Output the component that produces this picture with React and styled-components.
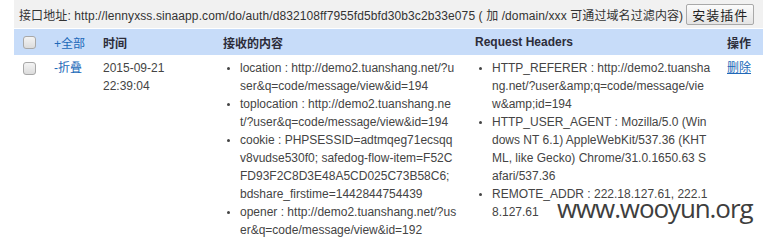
import React from 'react';
import styled, { createGlobalStyle } from 'styled-components';

const GlobalStyle = createGlobalStyle`
  body {
    margin: 0;
    background: #fff;
    font-family: "Liberation Sans", Arial, "Noto Sans CJK SC", sans-serif;
    font-size: 12px;
    color: #444;
  }
  * {
    box-sizing: border-box;
  }
`

const Page = styled.div`
  position: relative;
  padding-left: 14px;
  height: 240px;
  overflow: hidden;
`

const TopBar = styled.div`
  height: 28px;
  display: flex;
  align-items: center;
  padding-left: 5px;
  background: #f1f1f1;
  color: #333;
  white-space: nowrap;
  letter-spacing: 0.1px;
  margin-bottom: 1px;
`

const InstallButton = styled.button`
  margin-left: 3px;
  height: 21px;
  width: 68px;
  padding: 0;
  font-family: "Noto Sans CJK SC", sans-serif;
  font-size: 13px;
  letter-spacing: 1px;
  color: #222;
  border: 1px solid #a9a9a9;
  border-radius: 2px;
  background: linear-gradient(#fbfbfb, #e4e4e4);
`

const Table = styled.table`
  width: 100%;
  border-collapse: collapse;
  table-layout: fixed;
`

const HeadRow = styled.tr`
  background: #c7dcf9;
  height: 26px;
`

const Th = styled.th`
  text-align: left;
  padding: 0 8px;
  font-weight: bold;
  color: #2d2d3a;
  width: ${p => (p.$w ? `${p.$w}px` : 'auto')};
  white-space: nowrap;
`

const Td = styled.td`
  vertical-align: top;
  padding: 4px 8px;
  line-height: 18px;
  white-space: nowrap;
`

const Check = styled.span`
  display: inline-block;
  width: 13px;
  height: 13px;
  border: 1px solid #a8a8a8;
  border-radius: 3px;
  background: linear-gradient(#f4f4f4, #dcdcdc);
  vertical-align: middle;
  margin-left: 1px;
`

const CheckCell = styled.div`
  display: flex;
  align-items: center;
  height: 18px;
`

const Toggle = styled.a`
  color: #2068b8;
  text-decoration: none;
  font-weight: normal;
`

const DeleteLink = styled.a`
  color: #2068b8;
  text-decoration: underline;
`

const List = styled.ul`
  margin: 0;
  padding-left: 17px;
  list-style: disc;
`

const Item = styled.li`
  line-height: 18px;
  &::marker {
    font-size: 10px;
  }
`

/* site watermark laid over the screenshot */
const Watermark = styled.div`
  position: absolute;
  left: 557px;
  top: 199px;
  line-height: 18px;
  font-family: "Open Sans", "Liberation Sans", sans-serif;
  font-size: 26px;
  color: #3e3e3e;
  letter-spacing: -1.1px;
`

const content = [
  ['location : http://demo2.tuanshang.net/?u', 'ser&q=code/message/view&id=194'],
  ['toplocation : http://demo2.tuanshang.ne', 't/?user&q=code/message/view&id=194'],
  ['cookie : PHPSESSID=adtmqeg71ecsqq', 'v8vudse530f0; safedog-flow-item=F52C', 'FD93F2C8D3E48A5CD025C73B58C6;', 'bdshare_firstime=1442844754439'],
  ['opener : http://demo2.tuanshang.net/?us', 'er&q=code/message/view&id=192'],
];

const headers = [
  ['HTTP_REFERER : http://demo2.tuansha', 'ng.net/?user&amp;q=code/message/vie', 'w&amp;id=194'],
  ['HTTP_USER_AGENT : Mozilla/5.0 (Win', 'dows NT 6.1) AppleWebKit/537.36 (KHT', 'ML, like Gecko) Chrome/31.0.1650.63 S', 'afari/537.36'],
  ['REMOTE_ADDR : 222.18.127.61, 222.1', '8.127.61'],
];

const Lines = ({ items }) => (
  <List>
    {items.map((lines, i) => (
      <Item key={i}>
        {lines.map((l, j) => (
          <React.Fragment key={j}>
            {j > 0 && <br />}
            {l}
          </React.Fragment>
        ))}
      </Item>
    ))}
  </List>
);

const App = () => {
  return (
    <Page>
      <GlobalStyle />
      <TopBar>
        接口地址: http://lennyxss.sinaapp.com/do/auth/d832108ff7955fd5bfd30b3c2b33e075 ( 加 /domain/xxx 可通过域名过滤内容)
        <InstallButton>安装插件</InstallButton>
      </TopBar>
      <Table>
        <thead>
          <HeadRow>
            <Th $w={32}><Check /></Th>
            <Th $w={49}><Toggle href="#">+全部</Toggle></Th>
            <Th $w={120}>时间</Th>
            <Th $w={252}>接收的内容</Th>
            <Th $w={252}>Request Headers</Th>
            <Th>操作</Th>
          </HeadRow>
        </thead>
        <tbody>
          <tr>
            <Td><CheckCell><Check /></CheckCell></Td>
            <Td><Toggle href="#">-折叠</Toggle></Td>
            <Td>2015-09-21<br />22:39:04</Td>
            <Td><Lines items={content} /></Td>
            <Td><Lines items={headers} /></Td>
            <Td><DeleteLink href="#">删除</DeleteLink></Td>
          </tr>
        </tbody>
      </Table>
      <Watermark>www.wooyun.org</Watermark>
    </Page>
  )
}

export default App
